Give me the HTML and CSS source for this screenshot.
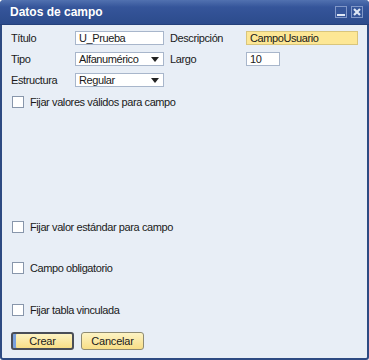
FILE: index.html
```html
<!DOCTYPE html>
<html lang="es">
<head>
  <meta charset="UTF-8">
  <title>Datos de campo</title>
  <link rel="stylesheet" href="styles.css">
</head>
<body>
  <div class="window">
    <div class="titlebar">
      <span class="title">Datos de campo</span>
      <div class="title-buttons">
        <span class="tb-btn tb-min"></span>
        <span class="tb-btn tb-close">
          <svg width="8" height="8" viewBox="0 0 8 8"><path d="M1 1L7 7M7 1L1 7" stroke="#dfe7f5" stroke-width="2.2"/></svg>
        </span>
      </div>
    </div>

    <div class="content">
      <div class="field-grid">
        <label class="lbl">Título</label>
        <div class="input">U_Prueba</div>
        <label class="lbl lbl-right">Descripción</label>
        <div class="input input-yellow">CampoUsuario</div>

        <label class="lbl">Tipo</label>
        <div class="select">Alfanumérico<span class="arrow"></span></div>
        <label class="lbl lbl-right">Largo</label>
        <div class="input input-short">10</div>

        <label class="lbl">Estructura</label>
        <div class="select">Regular<span class="arrow"></span></div>
      </div>

      <div class="check check-first"><span class="box"></span>Fijar valores válidos para campo</div>
      <div class="check check-std"><span class="box"></span>Fijar valor estándar para campo</div>
      <div class="check check-req"><span class="box"></span>Campo obligatorio</div>
      <div class="check check-link"><span class="box"></span>Fijar tabla vinculada</div>

      <div class="buttons">
        <button class="btn btn-default">Crear</button>
        <button class="btn">Cancelar</button>
      </div>
    </div>
  </div>
</body>
</html>
```

FILE: styles.css
```css
/* Base */
body {
  margin: 0;
  font-family: "Liberation Sans", Arial, sans-serif;
  font-size: 11px;
  letter-spacing: -0.4px;
  color: #1a1a1a;
  background: #ffffff;
}

/* Window frame */
.window {
  width: 369px;
  height: 360px;
  box-sizing: border-box;
  background: #e8eef6;
  border: 2px solid #2d4a82;
  border-top: none;
  border-radius: 4px 4px 3px 3px;
  display: flex;
  flex-direction: column;
}

.titlebar {
  height: 24px;
  margin: 0 -2px;
  padding: 0 6px 0 10px;
  display: flex;
  align-items: center;
  justify-content: space-between;
  background: linear-gradient(#5171b0, #35559a 30%, #2c4b8c);
  border-radius: 4px 4px 0 0;
  border-bottom: 1px solid #24407a;
}

.title {
  color: #ffffff;
  font-weight: bold;
  font-size: 12px;
  letter-spacing: 0;
}

.title-buttons {
  display: flex;
  gap: 4px;
}

.tb-btn {
  width: 10px;
  height: 10px;
  border: 1px solid #8298c8;
  background: #36569a;
  display: flex;
  align-items: center;
  justify-content: center;
  box-sizing: content-box;
}

.tb-min::after {
  content: "";
  width: 8px;
  height: 2px;
  background: #dfe7f5;
  margin-top: 6px;
}

/* Content */
.content {
  flex: 1;
  padding: 6px 9px 0 9px;
  display: flex;
  flex-direction: column;
}

.field-grid {
  display: grid;
  grid-template-columns: 64px 89px 82px 112px;
  row-gap: 7px;
  align-items: center;
}

.lbl-right {
  padding-left: 6px;
}

.lbl {
  line-height: 14px;
}

.input, .select {
  height: 14px;
  line-height: 13px;
  box-sizing: border-box;
  border: 1px solid #a8b6cb;
  background: #ffffff;
  padding: 0 3px;
  white-space: nowrap;
}

.input-yellow {
  background: #fde795;
  border-color: #d9c57c;
}

.input-short {
  width: 34px;
}

.select {
  position: relative;
}

.arrow {
  position: absolute;
  right: 4px;
  top: 4px;
  width: 0;
  height: 0;
  border-left: 4px solid transparent;
  border-right: 4px solid transparent;
  border-top: 5px solid #222;
}

/* Checkboxes */
.check {
  display: flex;
  align-items: center;
  gap: 6px;
  line-height: 14px;
  padding-left: 1px;
}

.box {
  width: 12px;
  height: 12px;
  box-sizing: border-box;
  border: 1px solid #8896ab;
  background: #ffffff;
}

.check-first { margin-top: 8px; }
.check-std { margin-top: 111px; }
.check-req { margin-top: 27px; }
.check-link { margin-top: 28px; }

/* Buttons */
.buttons {
  display: flex;
  gap: 7px;
  margin-top: 15px;
}

.btn {
  width: 63px;
  height: 18px;
  font-family: inherit;
  font-size: 11px;
  letter-spacing: -0.2px;
  color: #1a1a1a;
  border: 1px solid #8f8b72;
  border-radius: 3px;
  background: linear-gradient(#fdf3c4, #f8de86);
  padding: 0;
}

.btn-default {
  border: 2px solid #4a4e57;
  box-shadow: inset 3px 0 0 #7aa0dc;
}
```
